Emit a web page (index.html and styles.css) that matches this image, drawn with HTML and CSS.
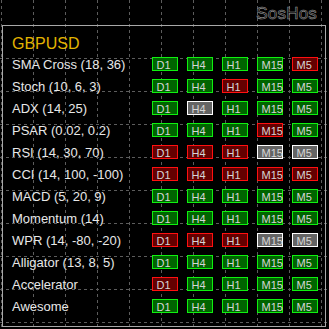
FILE: index.html
```html
<!DOCTYPE html>
<html lang="en">
<head>
<meta charset="utf-8">
<title>GBPUSD signals</title>
<link rel="stylesheet" href="styles.css">
</head>
<body>
<div class="grid-layer" aria-hidden="true">
  <svg width="329" height="329" viewBox="0 0 329 329">
    <g class="grid-lines">
      <line x1="1.5" y1="0" x2="1.5" y2="329"/>
      <line x1="33.5" y1="0" x2="33.5" y2="329"/>
      <line x1="65.5" y1="0" x2="65.5" y2="329"/>
      <line x1="97.5" y1="0" x2="97.5" y2="329"/>
      <line x1="129.5" y1="0" x2="129.5" y2="329"/>
      <line x1="161.5" y1="0" x2="161.5" y2="329"/>
      <line x1="193.5" y1="0" x2="193.5" y2="329"/>
      <line x1="225.5" y1="0" x2="225.5" y2="329"/>
      <line x1="257.5" y1="0" x2="257.5" y2="329"/>
      <line x1="289.5" y1="0" x2="289.5" y2="329"/>
      <line x1="321.5" y1="0" x2="321.5" y2="329"/>
      <line x1="0" y1="58.5" x2="329" y2="58.5"/>
      <line x1="0" y1="91.5" x2="329" y2="91.5"/>
      <line x1="0" y1="124.5" x2="329" y2="124.5"/>
      <line x1="0" y1="157.5" x2="329" y2="157.5"/>
      <line x1="0" y1="190.5" x2="329" y2="190.5"/>
      <line x1="0" y1="223.5" x2="329" y2="223.5"/>
      <line x1="0" y1="256.5" x2="329" y2="256.5"/>
      <line x1="0" y1="289.5" x2="329" y2="289.5"/>
      <line x1="0" y1="322.5" x2="329" y2="322.5"/>
    </g>
  </svg>
</div>

<header class="top">
  <span class="brand">SosHos</span>
</header>

<section class="panel">
  <h1 class="pair">GBPUSD</h1>
  <ul class="rows">
    <li class="row"><span class="label">SMA Cross (18, 36)</span><span class="tfs"><span class="tf up">D1</span><span class="tf up">H4</span><span class="tf up">H1</span><span class="tf up">M15</span><span class="tf down">M5</span></span></li>
    <li class="row"><span class="label">Stoch (10, 6, 3)</span><span class="tfs"><span class="tf up">D1</span><span class="tf up">H4</span><span class="tf down">H1</span><span class="tf up">M15</span><span class="tf up">M5</span></span></li>
    <li class="row"><span class="label">ADX (14, 25)</span><span class="tfs"><span class="tf up">D1</span><span class="tf flat">H4</span><span class="tf up">H1</span><span class="tf up">M15</span><span class="tf up">M5</span></span></li>
    <li class="row"><span class="label">PSAR (0.02, 0.2)</span><span class="tfs"><span class="tf up">D1</span><span class="tf up">H4</span><span class="tf up">H1</span><span class="tf down">M15</span><span class="tf up">M5</span></span></li>
    <li class="row"><span class="label">RSI (14, 30, 70)</span><span class="tfs"><span class="tf down">D1</span><span class="tf down">H4</span><span class="tf down">H1</span><span class="tf flat">M15</span><span class="tf flat">M5</span></span></li>
    <li class="row"><span class="label">CCI (14, 100, -100)</span><span class="tfs"><span class="tf down">D1</span><span class="tf down">H4</span><span class="tf down">H1</span><span class="tf down">M15</span><span class="tf down">M5</span></span></li>
    <li class="row"><span class="label">MACD (5, 20, 9)</span><span class="tfs"><span class="tf up">D1</span><span class="tf up">H4</span><span class="tf up">H1</span><span class="tf up">M15</span><span class="tf up">M5</span></span></li>
    <li class="row"><span class="label">Momentum (14)</span><span class="tfs"><span class="tf up">D1</span><span class="tf up">H4</span><span class="tf up">H1</span><span class="tf up">M15</span><span class="tf up">M5</span></span></li>
    <li class="row"><span class="label">WPR (14, -80, -20)</span><span class="tfs"><span class="tf down">D1</span><span class="tf down">H4</span><span class="tf down">H1</span><span class="tf flat">M15</span><span class="tf flat">M5</span></span></li>
    <li class="row"><span class="label">Alligator (13, 8, 5)</span><span class="tfs"><span class="tf up">D1</span><span class="tf up">H4</span><span class="tf up">H1</span><span class="tf up">M15</span><span class="tf up">M5</span></span></li>
    <li class="row"><span class="label">Accelerator</span><span class="tfs"><span class="tf down">D1</span><span class="tf up">H4</span><span class="tf up">H1</span><span class="tf up">M15</span><span class="tf up">M5</span></span></li>
    <li class="row"><span class="label">Awesome</span><span class="tfs"><span class="tf up">D1</span><span class="tf up">H4</span><span class="tf up">H1</span><span class="tf up">M15</span><span class="tf up">M5</span></span></li>
  </ul>
</section>
</body>
</html>
```

FILE: styles.css
```css
html, body {
  margin: 0;
  padding: 0;
}

body {
  width: 329px;
  height: 329px;
  overflow: hidden;
  background: #000;
  position: relative;
  font-family: "Liberation Sans", Arial, sans-serif;
}

.grid-layer {
  position: absolute;
  left: 0;
  top: 0;
  width: 329px;
  height: 329px;
  pointer-events: none;
}

.grid-layer svg {
  display: block;
}

.grid-lines line {
  stroke: #5c5c5c;
  stroke-width: 1;
  stroke-dasharray: 3 3;
  shape-rendering: crispEdges;
}

.top {
  position: relative;
  height: 25px;
  box-sizing: border-box;
  padding: 4px 12px 0 0;
  display: flex;
  justify-content: flex-end;
}

.brand {
  font-size: 17px;
  line-height: 20px;
  color: #000;
  -webkit-text-stroke: 0.6px #9a9a9a;
  letter-spacing: 0.2px;
}

.panel {
  position: relative;
  margin-left: 2px;
  width: 324px;
  height: 302px;
  box-sizing: border-box;
  border: 1px solid #a8a8a8;
  padding: 9px 7px 0 9px;
}

.pair {
  margin: 0 0 4px;
  font-size: 16px;
  line-height: 18px;
  font-weight: normal;
  color: #e2b400;
}

.rows {
  list-style: none;
  margin: 0;
  padding: 0;
  display: flex;
  flex-direction: column;
  gap: 8px;
}

.row {
  display: flex;
  align-items: flex-start;
  height: 14px;
}

.label {
  flex: 1;
  font-size: 13px;
  line-height: 14px;
  padding-top: 1px;
  color: #e8e8e8;
  white-space: nowrap;
}

.tfs {
  display: flex;
  gap: 9px;
}

.tf {
  width: 26px;
  height: 14px;
  box-sizing: border-box;
  border: 1px solid;
  padding-left: 3.5px;
  font-size: 11px;
  line-height: 14px;
  color: #d6d6d6;
  white-space: nowrap;
}

.tf.up {
  background: #006400;
  border-color: #10f010;
}

.tf.down {
  background: #640000;
  border-color: #ff1010;
}

.tf.flat {
  background: #646464;
  border-color: #ffffff;
}
```
